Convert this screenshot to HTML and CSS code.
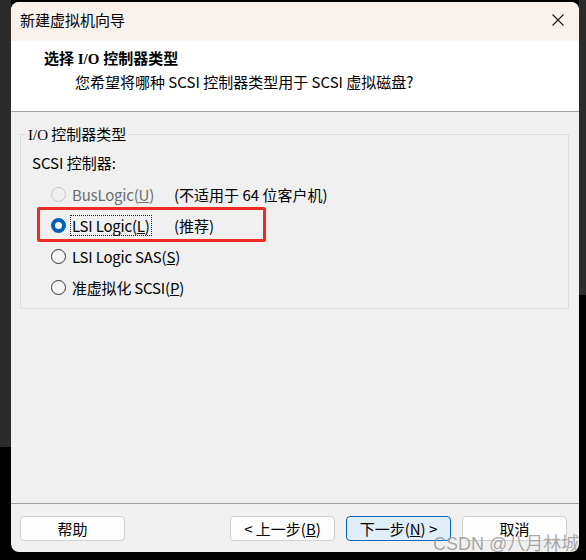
FILE: index.html
```html
<!DOCTYPE html>
<html lang="zh-CN">
<head>
<meta charset="utf-8">
<title>新建虚拟机向导</title>
<link rel="stylesheet" href="styles.css">
</head>
<body>
<div class="window">
  <div class="titlebar">
    <span class="title">新建虚拟机向导</span>
    <span class="close">
      <svg width="12" height="12" viewBox="0 0 12 12"><path d="M0.5 0.5 L11.5 11.5 M11.5 0.5 L0.5 11.5" stroke="#1a1a1a" stroke-width="1.1" fill="none"/></svg>
    </span>
  </div>
  <div class="header">
    <div class="h-title"><span class="lat">选择 </span><span class="lat">I/O</span> 控制器类型</div>
    <div class="h-sub">您希望将哪种 SCSI 控制器类型用于 SCSI 虚拟磁盘?</div>
  </div>
  <div class="content">
    <fieldset class="group">
      <legend><span class="lat">I/O</span> 控制器类型</legend>
      <div class="label">SCSI 控制器:</div>
      <div class="row">
        <span class="radio disabled"></span>
        <span class="opt disabled-text">BusLogic(<u>U</u>)</span>
        <span class="note">(不适用于 64 位客户机)</span>
      </div>
      <div class="row">
        <span class="radio checked"></span>
        <span class="opt focus">LSI Logic(<u>L</u>)</span>
        <span class="note">(推荐)</span>
        <span class="highlight"></span>
      </div>
      <div class="row">
        <span class="radio"></span>
        <span class="opt">LSI Logic SAS(<u>S</u>)</span>
      </div>
      <div class="row">
        <span class="radio"></span>
        <span class="opt">准虚拟化 SCSI(<u>P</u>)</span>
      </div>
    </fieldset>
  </div>
  <div class="footer">
    <button class="btn">帮助</button>
    <div class="spacer"></div>
    <button class="btn">&lt; 上一步(<u>B</u>)</button>
    <button class="btn primary">下一步(<u>N</u>) &gt;</button>
    <button class="btn">取消</button>
  </div>
  <div class="watermark">CSDN @八月林城</div>
</div>
</body>
</html>
```

FILE: styles.css
```css
html, body {
  margin: 0;
  padding: 0;
}
body {
  width: 586px;
  height: 560px;
  overflow: hidden;
  background:
    linear-gradient(#2b2b2b, #2b2b2b) 0 0 / 11px 447px no-repeat,
    linear-gradient(#2b2b2b, #2b2b2b) 579px 0 / 7px 295px no-repeat,
    #000;
  font-family: "Noto Sans CJK SC", "Noto Sans", sans-serif;
  font-size: 15px;
  color: #000;
}
.window {
  position: relative;
  margin: 2px 0 0 11px;
  width: 568px;
  height: 550px;
  border-radius: 8px;
  overflow: hidden;
  background: #f0f0f0;
  display: flex;
  flex-direction: column;
}
.titlebar {
  height: 39px;
  background: #f8f1ec;
  display: flex;
  align-items: center;
  justify-content: space-between;
  padding: 0 15px 0 9px;
  box-sizing: border-box;
  flex: none;
}
.title {
  line-height: 20px;
  margin-top: -3px;
}
.close {
  display: flex;
  margin-top: -3px;
}
.header {
  height: 71px;
  box-sizing: border-box;
  background: #fff;
  border-bottom: 1px solid #a0a0a0;
  padding: 8px 0 0 33px;
  flex: none;
}
.h-title {
  font-weight: bold;
  line-height: 20px;
  font-family: "Liberation Serif", "Noto Sans CJK SC", serif;
}
.h-sub {
  margin-top: 3px;
  padding-left: 31px;
  line-height: 20px;
}
.content {
  flex: 1;
  padding: 12px 10px 0 9px;
}
.group {
  margin: 0;
  border: 1px solid #dcdcdc;
  padding: 8px 0 10px 11px;
  height: 185px;
  box-sizing: border-box;
}
.group legend {
  padding: 0 2px 0 2px;
  margin-left: -6px;
  line-height: 20px;
}
.group legend .lat {
  font-family: "Liberation Serif", serif;
}
.label {
  line-height: 20px;
  margin-bottom: 6px;
}
.row {
  position: relative;
  height: 31px;
  display: flex;
  align-items: center;
  padding-left: 19px;
}
.radio {
  width: 15px;
  height: 15px;
  box-sizing: border-box;
  border: 1px solid #333;
  border-radius: 50%;
  background: #f5f5f5;
  flex: none;
  margin-right: 4px;
}
.radio.disabled {
  border-color: #c5c5c5;
  background: #f0f0f0;
}
.radio.checked {
  border: 4px solid #005fb8;
  background: #fff;
}
.opt {
  line-height: 19px;
  padding: 0 1px;
  border: 1px dotted transparent;
  letter-spacing: -0.2px;
}
.opt.focus {
  border-color: #222;
}
.disabled-text {
  color: #6d6d6d;
}
.note {
  position: absolute;
  left: 142px;
  line-height: 20px;
}
.highlight {
  position: absolute;
  left: 5px;
  top: -3px;
  width: 229px;
  height: 35px;
  border: 3px solid #ee2a24;
  border-radius: 2px;
  box-sizing: border-box;
}
.footer {
  flex: none;
  height: 49px;
  box-sizing: border-box;
  border-top: 1px solid #a0a0a0;
  display: flex;
  align-items: flex-start;
  padding: 12px 12px 0 9px;
  gap: 11px;
}
.spacer {
  flex: 1;
}
.btn {
  width: 105px;
  height: 25px;
  font: inherit;
  line-height: 20px;
  padding: 0;
  background: #fdfdfd;
  border: 1px solid #d0d0d0;
  border-radius: 4px;
  color: #000;
}
.btn.primary {
  background: #e0eef9;
  border-color: #0067c0;
}
.watermark {
  position: absolute;
  left: 422px;
  top: 527px;
  font-family: "Liberation Sans", "Noto Sans CJK SC", sans-serif;
  font-size: 18px;
  color: rgba(110, 110, 110, 0.6);
  text-shadow: 0 0 1px rgba(255,255,255,0.6);
  white-space: nowrap;
}
```
